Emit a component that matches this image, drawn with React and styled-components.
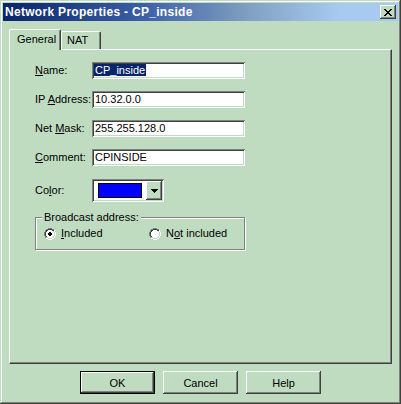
import React from "react";
import styled, { createGlobalStyle, css } from "styled-components";

const FACE = "#C0DCC0";

const Global = createGlobalStyle`
  html, body { margin: 0; padding: 0; background: ${FACE}; }
  body { font-family: "Liberation Sans", Arial, sans-serif; font-size: 11px; color: #000; }
  * { box-sizing: border-box; }
`;

const raised = css`
  box-shadow: inset -1px -1px 0 #404040, inset 1px 1px 0 #ffffff,
    inset -2px -2px 0 #808080, inset 2px 2px 0 ${FACE};
`;

const sunken = css`
  box-shadow: inset 1px 1px 0 #808080, inset -1px -1px 0 #ffffff,
    inset 2px 2px 0 #404040, inset -2px -2px 0 ${FACE};
`;

const Window = styled.div`
  width: 401px;
  height: 404px;
  background: ${FACE};
  padding: 3px;
  box-shadow: inset -1px -1px 0 #404040, inset 1px 1px 0 ${FACE},
    inset -2px -2px 0 #808080, inset 2px 2px 0 #ffffff;
  display: flex;
  flex-direction: column;
`;

const TitleBar = styled.div`
  height: 18px;
  display: flex;
  align-items: center;
  justify-content: space-between;
  padding: 0 2px 0 2px;
  background: linear-gradient(to right, #0a246a 0%, #3a5ea8 35%, #7fa0c0 62%, #a6caf0 85%, #a6caf0 100%);
`;

const Title = styled.span`
  color: #fff;
  font-weight: bold;
  font-size: 12px;
  letter-spacing: 0.3px;
  white-space: nowrap;
`;

const CloseButton = styled.div`
  width: 16px;
  height: 14px;
  background: ${FACE};
  ${raised};
  display: flex;
  align-items: center;
  justify-content: center;
`;

const Body = styled.div`
  flex: 1;
  display: flex;
  flex-direction: column;
  padding: 8px 6px 0 6px;
`;

const TabStrip = styled.div`
  display: flex;
  align-items: flex-end;
  height: 20px;
  position: relative;
  z-index: 1;
`;

const Tab = styled.div`
  height: ${(p) => (p.$active ? "21px" : "18px")};
  margin-bottom: ${(p) => (p.$active ? "-1px" : "0")};
  padding: ${(p) => (p.$active ? "3px 7px 0 7px" : "2px 6px 0 5px")};
  width: ${(p) => p.$w}px;
  background: ${FACE};
  border-top: 1px solid #fff;
  border-left: 1px solid #fff;
  border-right: 1px solid #404040;
  box-shadow: inset -1px 0 0 #808080;
  border-top-left-radius: 2px;
  border-top-right-radius: 2px;
  line-height: 13px;
  white-space: nowrap;
`;

const Panel = styled.div`
  height: 315px;
  background: ${FACE};
  border-top: 1px solid #fff;
  border-left: 1px solid #fff;
  border-right: 1px solid #404040;
  border-bottom: 1px solid #404040;
  box-shadow: inset -1px -1px 0 #808080;
  padding: 12px 0 0 24px;
  display: flex;
  flex-direction: column;
`;

const Form = styled.div`
  display: flex;
  flex-direction: column;
  gap: 12px;
`;

const Row = styled.div`
  display: flex;
  align-items: center;
  height: ${(p) => p.$h || 17}px;
  margin-top: ${(p) => p.$mt || 0}px;
`;

const Label = styled.span`
  width: 58px;
  padding-left: 1px;
  line-height: 13px;
  white-space: nowrap;
`;

const Field = styled.div`
  width: 153px;
  height: 17px;
  background: #fff;
  ${sunken};
  padding: 2px 0 0 3px;
  line-height: 13px;
  white-space: nowrap;
`;

const Selected = styled.span`
  background: #0a246a;
  color: #fff;
  padding: 0 1px;
  margin-left: -1px;
`;

const Combo = styled.div`
  width: 72px;
  height: 23px;
  background: #fff;
  ${sunken};
  padding: 2px;
  display: flex;
  align-items: stretch;
`;

const SwatchCell = styled.div`
  flex: 1;
  padding: 2px 4px 2px 4px;
  display: flex;
`;

const Swatch = styled.div`
  flex: 1;
  background: #0000ff;
  border: 1px solid #000;
`;

const DropButton = styled.div`
  width: 16px;
  background: ${FACE};
  ${raised};
  display: flex;
  align-items: center;
  justify-content: center;
`;

const GroupBox = styled.div`
  position: relative;
  width: 210px;
  height: 33px;
  margin-top: 15px;
  margin-left: 1px;
  border: 1px solid #808080;
  box-shadow: inset 1px 1px 0 #fff, 1px 1px 0 #fff;
  display: flex;
  align-items: center;
  padding: 0 0 0 8px;
`;

const Legend = styled.span`
  position: absolute;
  top: -7px;
  left: 6px;
  padding: 0 2px 0 2px;
  background: ${FACE};
  line-height: 13px;
  white-space: nowrap;
`;

const RadioItem = styled.label`
  display: flex;
  align-items: center;
  gap: 5px;
  width: ${(p) => p.$w}px;
  line-height: 13px;
  white-space: nowrap;
`;

const ButtonRow = styled.div`
  display: flex;
  justify-content: center;
  gap: 8px;
  margin-top: 7px;
`;

const Button = styled.div`
  width: 75px;
  height: 23px;
  background: ${FACE};
  display: flex;
  align-items: center;
  justify-content: center;
  ${(p) =>
    p.$default
      ? css`
          border: 1px solid #000;
          box-shadow: inset -1px -1px 0 #404040, inset 1px 1px 0 #ffffff,
            inset -2px -2px 0 #808080, inset 2px 2px 0 ${FACE};
        `
      : raised};
`;

const U = styled.span`
  text-decoration: underline;
  text-underline-offset: 1px;
`;

function Radio({ checked }) {
  return (
    <svg width="12" height="12" viewBox="0 0 12 12" shapeRendering="crispEdges">
      <path d="M4 0h4v1H4zM2 1h2v1H2zM8 1h2v1H8zM1 2h1v2H1zM0 4h1v4H0zM1 8h1v2H1z" fill="#808080" />
      <path d="M4 1h4v1H4zM2 2h2v1H2zM8 2h2v1H8zM2 3h1v1H2zM1 4h1v4H1zM2 8h1v1H2z" fill="#404040" />
      <path d="M10 2h1v2h-1zM11 4h1v4h-1zM10 8h1v2h-1zM8 10h2v1H8zM2 10h2v1H2zM4 11h4v1H4z" fill="#ffffff" />
      <path d="M9 3h1v1H9zM10 4h1v4h-1zM9 8h1v1H9zM8 9h2v1H8zM2 9h2v1H2zM4 10h4v1H4z" fill="#C0DCC0" />
      <path d="M4 2h4v1H4zM3 3h6v1H3zM2 4h8v4H2zM3 8h6v1H3zM4 9h4v1H4z" fill="#ffffff" />
      {checked && <path d="M5 4h2v1H5zM4 5h4v2H4zM5 7h2v1H5z" fill="#000" />}
    </svg>
  );
}

export default function App() {
  return (
    <>
      <Global />
      <Window>
        <TitleBar>
          <Title>Network Properties - CP_inside</Title>
          <CloseButton>
            <svg width="8" height="7" viewBox="0 0 8 7" shapeRendering="crispEdges">
              <path
                d="M0 0h2v1h1v1h2V1h1V0h2v1H7v1H6v1H5v1h1v1h1v1h1v1H6V6H5V5H3v1H2v1H0V6h1V5h1V4h1V3H2V2H1V1H0z"
                fill="#000"
              />
            </svg>
          </CloseButton>
        </TitleBar>
        <Body>
          <TabStrip>
            <Tab $active $w={52}>General</Tab>
            <Tab $w={40}>NAT</Tab>
          </TabStrip>
          <Panel>
            <Form>
              <Row>
                <Label><U>N</U>ame:</Label>
                <Field><Selected>CP_inside</Selected></Field>
              </Row>
              <Row>
                <Label>IP <U>A</U>ddress:</Label>
                <Field>10.32.0.0</Field>
              </Row>
              <Row>
                <Label>Net <U>M</U>ask:</Label>
                <Field>255.255.128.0</Field>
              </Row>
              <Row>
                <Label><U>C</U>omment:</Label>
                <Field>CPINSIDE</Field>
              </Row>
            </Form>
            <Row $h={23} $mt={13}>
              <Label>Co<U>l</U>or:</Label>
              <Combo>
                <SwatchCell><Swatch /></SwatchCell>
                <DropButton>
                  <svg width="7" height="4" viewBox="0 0 7 4" shapeRendering="crispEdges">
                    <path d="M0 0h7v1H0zM1 1h5v1H1zM2 2h3v1H2zM3 3h1v1H3z" fill="#000" />
                  </svg>
                </DropButton>
              </Combo>
            </Row>
            <GroupBox>
              <Legend>Broadcast address:</Legend>
              <RadioItem $w={105}>
                <Radio checked />
                <span><U>I</U>ncluded</span>
              </RadioItem>
              <RadioItem $w={90}>
                <Radio />
                <span>N<U>o</U>t included</span>
              </RadioItem>
            </GroupBox>
          </Panel>
          <ButtonRow>
            <Button $default>OK</Button>
            <Button>Cancel</Button>
            <Button>Help</Button>
          </ButtonRow>
        </Body>
      </Window>
    </>
  );
}
